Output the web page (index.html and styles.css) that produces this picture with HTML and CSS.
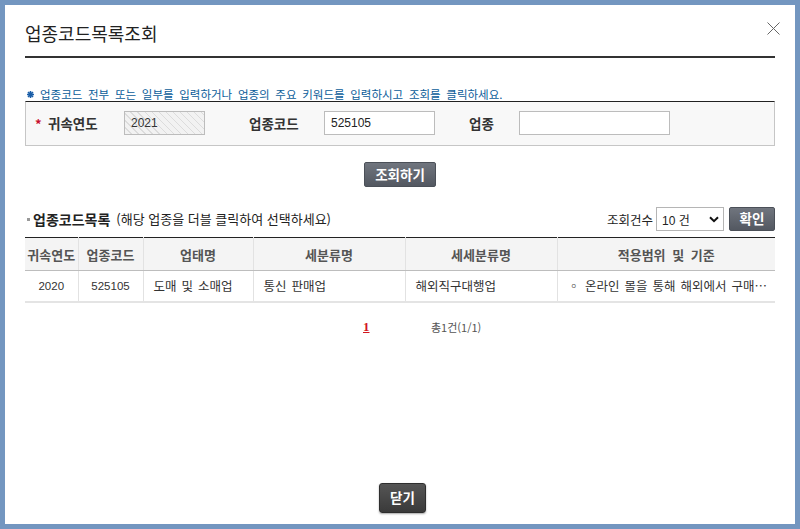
FILE: index.html
```html
<!DOCTYPE html>
<html lang="ko">
<head>
<meta charset="utf-8">
<title>업종코드목록조회</title>
<link rel="stylesheet" href="styles.css">
</head>
<body>
<div class="frame">
  <div class="popup">
    <div class="head">
      <h1 class="title">업종코드목록조회</h1>
      <span class="close" aria-label="닫기">
        <svg width="13" height="13" viewBox="0 0 13 13"><path d="M0.5 0.5 L12.5 12.5 M12.5 0.5 L0.5 12.5" stroke="#666" stroke-width="1" fill="none"/></svg>
      </span>
    </div>

    <p class="notice"><svg class="notice-ico" width="7" height="7" viewBox="0 0 7 7"><path d="M3.5 0 L3.5 7 M0 3.5 L7 3.5 M1 1 L6 6 M6 1 L1 6" stroke="#1a5ea8" stroke-width="1.6"/></svg>업종코드 전부 또는 일부를 입력하거나 업종의 주요 키워드를 입력하시고 조회를 클릭하세요.</p>

    <div class="search">
      <div class="field f1">
        <label class="lbl lbl1"><span class="req">*</span>귀속연도</label>
        <input class="inp inp1 ro" type="text" value="2021" readonly>
      </div>
      <div class="field f2">
        <label class="lbl lbl2">업종코드</label>
        <input class="inp inp2" type="text" value="525105">
      </div>
      <div class="field f3">
        <label class="lbl lbl3">업종</label>
        <input class="inp inp3" type="text" value="">
      </div>
    </div>

    <div class="btn-row">
      <button class="btn btn-search">조회하기</button>
    </div>

    <div class="list-head">
      <h2 class="sub"><span class="bullet"></span><b>업종코드목록</b><span class="hint">(해당 업종을 더블 클릭하여 선택하세요)</span></h2>
      <div class="count">
        <span class="count-lbl">조회건수</span>
        <span class="select"><span>10 건</span><svg width="10" height="7" viewBox="0 0 10 7"><path d="M1 1.2 L5 5.2 L9 1.2" stroke="#111" stroke-width="2" fill="none"/></svg></span>
        <button class="btn btn-ok">확인</button>
      </div>
    </div>

    <table class="grid">
      <colgroup>
        <col class="c1"><col class="c2"><col class="c3"><col class="c4"><col class="c5"><col class="c6">
      </colgroup>
      <thead>
        <tr><th>귀속연도</th><th>업종코드</th><th>업태명</th><th>세분류명</th><th>세세분류명</th><th>적용범위 및 기준</th></tr>
      </thead>
      <tbody>
        <tr><td class="ctr num">2020</td><td class="ctr num">525105</td><td>도매 및 소매업</td><td>통신 판매업</td><td>해외직구대행업</td><td>◦ 온라인 몰을 통해 해외에서 구매…</td></tr>
      </tbody>
    </table>

    <div class="paging">
      <a class="page-cur">1</a>
      <span class="total">총1건(1/1)</span>
    </div>

    <div class="foot">
      <button class="btn btn-close">닫기</button>
    </div>
  </div>
</div>
</body>
</html>
```

FILE: styles.css
```css
* { box-sizing: border-box; }
html, body { margin: 0; padding: 0; }
body {
  background: #7396c0;
  font-family: "Liberation Sans", "Noto Sans CJK KR", sans-serif;
  color: #333;
  width: 800px;
  height: 529px;
  overflow: hidden;
}
.frame { padding: 5px; height: 529px; }
.popup {
  background: #fff;
  height: 519px;
  padding: 0 20px;
  display: flex;
  flex-direction: column;
}
.head {
  display: flex;
  justify-content: space-between;
  align-items: flex-start;
  padding-top: 16px;
  padding-bottom: 11px;
  border-bottom: 2px solid #333;
}
.title {
  margin: 0;
  font-family: "Noto Sans CJK KR", sans-serif;
  font-weight: 400;
  font-size: 18px;
  line-height: 24px;
  color: #222;
}
.close { display: block; margin-top: 1px; margin-right: -5px; line-height: 0; }

.notice {
  margin: 29px 0 0 0;
  font-family: "Noto Sans CJK KR", sans-serif;
  font-size: 11.5px;
  line-height: 14px;
  color: #0b5d9a;
  word-spacing: 2.5px;
  padding-left: 2px;
  display: flex;
  align-items: center;
  white-space: nowrap;
}
.notice-ico { margin-right: 6px; flex: none; }

.search {
  display: flex;
  align-items: center;
  background: #f8f8f8;
  border: 1px solid #c6c6c6;
  border-top: 1px solid #222;
  padding: 9px 0 10px 9px;
}
.field { display: flex; align-items: center; }
.f2 { margin-left: 44px; }
.f3 { margin-left: 34px; }
.lbl {
  font-family: "Noto Sans CJK KR", sans-serif;
  font-weight: 700;
  font-size: 13.5px;
  line-height: 16px;
  color: #333;
  display: flex;
  align-items: center;
}
.lbl1 { width: 89px; }
.lbl2 { width: 75px; }
.lbl3 { width: 50px; }
.req {
  color: #c8102e;
  font-size: 13px;
  width: 13px;
  margin-top: 2px;
}
.inp {
  height: 24px;
  border: 1px solid #bcbcbc;
  background: #fff;
  font-family: "Liberation Sans", sans-serif;
  font-size: 12px;
  color: #222;
  padding: 0 6px;
  margin: 0;
  outline: none;
}
.inp1 { width: 81px; }
.inp2 { width: 111px; }
.inp3 { width: 151px; }
.ro {
  background-color: #f2f2f2;
  background-image: repeating-linear-gradient(45deg, #f2f2f2 0, #f2f2f2 4px, #dcdcdc 4px, #dcdcdc 5px);
  color: #333;
}

.btn {
  font-family: "Noto Sans CJK KR", sans-serif;
  font-weight: 700;
  color: #fff;
  border: 1px solid #4b5058;
  border-radius: 2px;
  background: linear-gradient(#70757e, #535861);
  cursor: pointer;
  padding: 0;
  line-height: 1;
}
.btn-row { display: flex; justify-content: center; margin-top: 16px; }
.btn-search { width: 72px; height: 25px; font-size: 13.5px; }

.list-head {
  display: flex;
  justify-content: space-between;
  align-items: center;
  margin-top: 20px;
  height: 24px;
}
.sub {
  margin: 0;
  font-family: "Noto Sans CJK KR", sans-serif;
  font-size: 13px;
  font-weight: 400;
  line-height: 16px;
  color: #222;
  display: flex;
  align-items: center;
  white-space: nowrap;
}
.sub b { font-weight: 700; font-size: 14px; }
.bullet {
  width: 3px; height: 3px;
  background: #999;
  margin: 1px 3px 0 2px;
  display: inline-block;
}
.hint { color: #222; margin-left: 6px; }
.count { display: flex; align-items: center; }
.count-lbl {
  font-family: "Noto Sans CJK KR", sans-serif;
  font-size: 12.5px;
  color: #222;
  margin-right: 3px;
}
.select {
  width: 68px; height: 24px;
  border: 1px solid #b5b5b5;
  background: #fff;
  display: flex;
  align-items: center;
  justify-content: space-between;
  padding: 0 4px 0 5px;
  font-family: "Liberation Sans", "Noto Sans CJK KR", sans-serif;
  font-size: 12px;
  color: #222;
  margin-right: 5px;
}
.btn-ok { width: 46px; height: 24px; font-size: 13.5px; }

.grid {
  margin-top: 6px;
  width: 750px;
  border-collapse: collapse;
  table-layout: fixed;
  border-top: 1px solid #222;
}
.c1 { width: 53px; } .c2 { width: 65px; } .c3 { width: 110px; }
.c4 { width: 152px; } .c5 { width: 152px; } .c6 { width: 218px; }
.grid th {
  background: #f4f4f4;
  height: 33px;
  font-family: "Noto Sans CJK KR", sans-serif;
  font-size: 13px;
  font-weight: 700;
  color: #555;
  text-align: center;
  border-left: 1px solid #e2e2e2;
  border-bottom: 1px solid #bdbdbd;
  padding: 0;
  white-space: nowrap;
  overflow: hidden;
  word-spacing: 3px;
}
.grid td {
  height: 31px;
  font-family: "Noto Sans CJK KR", sans-serif;
  font-size: 12.5px;
  word-spacing: 1.5px;
  color: #333;
  border-left: 1px solid #e2e2e2;
  border-bottom: 2px solid #e4e4e4;
  padding: 0 0 0 10px;
  white-space: nowrap;
  overflow: hidden;
}
.grid th:first-child, .grid td:first-child { border-left: none; }
.grid td.ctr { text-align: center; padding: 0; }
.grid td.num { font-family: "Liberation Sans", sans-serif; font-size: 11.5px; }

.paging {
  display: flex;
  align-items: center;
  margin-top: 16px;
  padding-left: 338px;
  height: 16px;
}
.page-cur {
  font-family: "Liberation Serif", serif;
  font-weight: 700;
  font-size: 13px;
  color: #d2161e;
  text-decoration: underline;
  width: 6px;
}
.total {
  margin-left: 62px;
  font-family: "Noto Sans CJK KR", sans-serif;
  font-size: 11px;
  color: #555;
}

.foot {
  margin-top: auto;
  display: flex;
  justify-content: center;
  padding-bottom: 11px;
  padding-left: 5px;
}
.btn-close {
  width: 47px; height: 30px;
  font-size: 13.5px;
  border: 1px solid #2e2e2e;
  border-radius: 3px;
  background: linear-gradient(#555, #3a3a3a);
  box-shadow: 0 1px 2px rgba(0,0,0,0.35);
}
```
